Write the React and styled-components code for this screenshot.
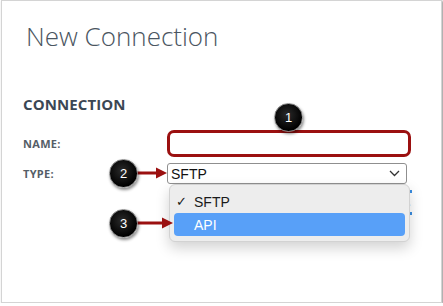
import React from 'react'
import styled, { createGlobalStyle } from 'styled-components'

const GlobalStyle = createGlobalStyle`
  html, body {
    margin: 0;
    padding: 0;
    background: #ffffff;
  }
  body {
    font-family: "Open Sans", "Liberation Sans", sans-serif;
  }
`

const Card = styled.div`
  position: relative;
  box-sizing: border-box;
  width: 441px;
  height: 303px;
  margin-left: 1px;
  padding: 17px 21px 0;
  background: #fff;
  border: 1px solid #d4d4d4;
  box-shadow: 1px 1px 2px rgba(0, 0, 0, 0.45);
  overflow: hidden;
`

const Title = styled.h1`
  margin: 0 0 0 3px;
  font-size: 26px;
  line-height: 36px;
  font-weight: 300;
  color: #4a5561;
`

const SectionHeading = styled.h2`
  margin: 40px 0 16px;
  font-size: 15px;
  line-height: 20px;
  font-weight: 700;
  color: #3b4754;
  letter-spacing: 0.1px;
`

const Form = styled.div`
  display: grid;
  grid-template-columns: 144px 244px;
  row-gap: 6px;
  align-items: center;
`

const Label = styled.label`
  font-size: 11px;
  font-weight: 700;
  color: #555e67;
  letter-spacing: 0.3px;
`

const NameInput = styled.div`
  box-sizing: border-box;
  height: 27px;
  border: 3px solid #9b1010;
  border-radius: 7px;
  background: #fff;
`

const Select = styled.div`
  box-sizing: border-box;
  width: 240px;
  height: 21px;
  display: flex;
  align-items: center;
  justify-content: space-between;
  padding: 0 6px 0 3px;
  border: 1px solid #8f8f8f;
  border-radius: 3px;
  background: #fff;
  font-family: "Liberation Sans", Arial, sans-serif;
  font-size: 14px;
  color: #111;
`

const FocusedField = styled.div`
  grid-column: 2;
  justify-self: end;
  box-sizing: border-box;
  width: 120px;
  height: 25px;
  margin-right: -1px;
  border-top: 3px solid #3a8de0;
  border-bottom: 3px solid #3a8de0;
  display: flex;
  align-items: center;
  justify-content: flex-end;
  color: #888;
  font-size: 10px;
`

const Menu = styled.div`
  position: absolute;
  left: 167px;
  top: 183px;
  box-sizing: border-box;
  width: 241px;
  padding: 5px 4px;
  background: #ededed;
  border: 1px solid #d2d2d2;
  border-radius: 6px;
  box-shadow: 0 6px 14px rgba(0, 0, 0, 0.18);
  font-family: "Liberation Sans", Arial, sans-serif;
  font-size: 14px;
`

const MenuItem = styled.div`
  display: flex;
  align-items: center;
  height: 23px;
  padding-left: 2px;
  border-radius: 4px;
  background: ${p => (p.$active ? '#58a0f8' : 'transparent')};
  color: ${p => (p.$active ? '#fff' : '#1a1a1a')};
`

const Check = styled.span`
  display: inline-block;
  width: 18px;
  font-size: 13px;
`

const Badge = styled.div`
  position: absolute;
  left: ${p => p.$x - 14}px;
  top: ${p => p.$y - 14}px;
  width: 27px;
  height: 27px;
  border-radius: 50%;
  background: radial-gradient(circle at 45% 40%, #2a2a2a, #000 70%);
  border: 1px solid #8a8a8a;
  box-shadow: 1px 2px 3px rgba(0, 0, 0, 0.45);
  display: flex;
  align-items: center;
  justify-content: center;
  color: #fff;
  font-family: "Liberation Sans", Arial, sans-serif;
  font-size: 13px;
`

const Arrow = styled.svg`
  position: absolute;
  left: ${p => p.$x}px;
  top: ${p => p.$y - 6}px;
`

function Pointer({ x, y, length }) {
  return (
    <Arrow $x={x} $y={y} width={length} height="12" viewBox={`0 0 ${length} 12`}>
      <line x1="0" y1="6" x2={length - 9} y2="6" stroke="#9b1010" strokeWidth="3" />
      <polygon points={`${length - 11},0.5 ${length},6 ${length - 11},11.5`} fill="#9b1010" />
    </Arrow>
  )
}

function Chevron() {
  return (
    <svg width="11" height="7" viewBox="0 0 11 7">
      <polyline points="1,1 5.5,5.5 10,1" fill="none" stroke="#333" strokeWidth="1.3" />
    </svg>
  )
}

export default function App() {
  return (
    <>
      <GlobalStyle />
      <Card>
        <Title>New Connection</Title>
        <SectionHeading>CONNECTION</SectionHeading>
        <Form>
          <Label>NAME:</Label>
          <NameInput />
          <Label>TYPE:</Label>
          <Select>
            <span>SFTP</span>
            <Chevron />
          </Select>
          <FocusedField>⌄</FocusedField>
        </Form>

        <Menu>
          <MenuItem>
            <Check>✓</Check>SFTP
          </MenuItem>
          <MenuItem $active>
            <Check />API
          </MenuItem>
        </Menu>

        <Badge $x={286} $y={116}>1</Badge>
        <Pointer x={134} y={172} length={31} />
        <Badge $x={121} $y={172}>2</Badge>
        <Pointer x={134} y={222} length={37} />
        <Badge $x={121} $y={222}>3</Badge>
      </Card>
    </>
  )
}
